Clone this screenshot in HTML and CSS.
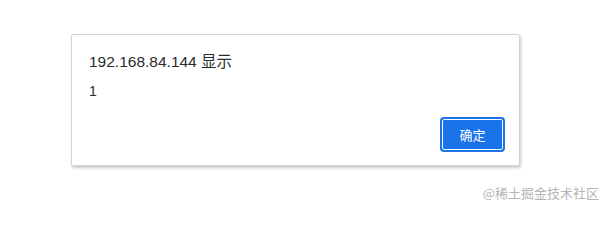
FILE: index.html
```html
<!DOCTYPE html>
<html lang="zh">
<head>
<meta charset="utf-8">
<link rel="stylesheet" href="styles.css">
</head>
<body>
<div class="page">
  <div class="dialog">
    <div class="title">192.168.84.144 显示</div>
    <div class="message">1</div>
    <div class="actions">
      <button class="ok">确定</button>
    </div>
  </div>
  <div class="watermark">@稀土掘金技术社区</div>
</div>
</body>
</html>
```
FILE: styles.css
```css
html, body {
  margin: 0;
  padding: 0;
  background: #ffffff;
}
.page {
  width: 607px;
  height: 207px;
  box-sizing: border-box;
  padding: 34px 8px 0 71px;
  display: flex;
  flex-direction: column;
  font-family: "Liberation Sans", "Noto Sans CJK SC", sans-serif;
}
.dialog {
  width: 449px;
  height: 132px;
  box-sizing: border-box;
  border: 1px solid #d4d4d4;
  border-radius: 2px;
  box-shadow: 1px 2px 3px rgba(0, 0, 0, 0.22);
  background: #fff;
  padding: 18px 14px 13px 17px;
  display: flex;
  flex-direction: column;
}
.title {
  font-size: 15.5px;
  line-height: 18px;
  color: #2b2b2b;
}
.message {
  margin-top: 12px;
  font-size: 14px;
  line-height: 16px;
  color: #2b2b2b;
}
.actions {
  margin-top: auto;
  display: flex;
  justify-content: flex-end;
}
.ok {
  width: 65px;
  height: 35px;
  box-sizing: border-box;
  border: 2px solid #1a73e8;
  border-radius: 4px;
  background: #1a73e8;
  box-shadow: inset 0 0 0 1px #ffffff;
  color: #ffffff;
  font-family: "Noto Sans CJK SC", sans-serif;
  font-size: 13px;
  padding: 0;
}
.watermark {
  margin-top: 19px;
  align-self: flex-end;
  font-family: "Noto Sans CJK SC", sans-serif;
  font-size: 13px;
  line-height: 15px;
  color: #b4b4b4;
}
```
